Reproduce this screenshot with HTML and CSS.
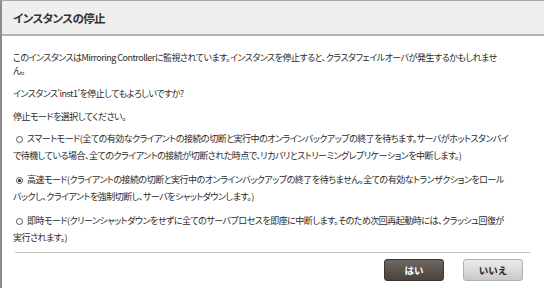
FILE: index.html
```html
<!DOCTYPE html>
<html lang="ja">
<head>
<meta charset="utf-8">
<link rel="stylesheet" href="styles.css">
</head>
<body>
<div class="dialog">
  <div class="titlebar"><h1 class="title">インスタンスの停止</h1></div>
  <div class="content">
    <p class="msg msg-first">このインスタンスはMirroring Controllerに監視されています。インスタンスを停止すると、クラスタフェイルオーバが発生するかもしれませ<br>ん。</p>
    <p class="msg">インスタンス'inst1'を停止してもよろしいですか?</p>
    <p class="msg last-msg">停止モードを選択してください。</p>
    <div class="option"><span class="radio"></span>スマートモード(全ての有効なクライアントの接続の切断と実行中のオンラインバックアップの終了を待ちます。サーバがホットスタンバイ<br>で待機している場合、全てのクライアントの接続が切断された時点で、リカバリとストリーミングレプリケーションを中断します。)</div>
    <div class="option"><span class="radio checked"></span>高速モード(クライアントの接続の切断と実行中のオンラインバックアップの終了を待ちません。全ての有効なトランザクションをロール<br>バックし、クライアントを強制切断し、サーバをシャットダウンします。)</div>
    <div class="option"><span class="radio"></span>即時モード(クリーンシャットダウンをせずに全てのサーバプロセスを即座に中断します。そのため次回再起動時には、クラッシュ回復が<br>実行されます。)</div>
    <hr class="sep">
    <div class="buttons">
      <button class="btn btn-yes">はい</button>
      <button class="btn btn-no">いいえ</button>
    </div>
  </div>
</div>
</body>
</html>
```
FILE: styles.css
```css
html, body { margin: 0; padding: 0; background: #fff; }
body {
  font-family: "Noto Sans CJK JP", "Noto Sans", sans-serif;
  color: #2a2a2a;
}
.dialog {
  width: 542px;
  height: 287px;
  border-left: 2px solid #8c8c8c;
  border-top: 1px solid #a8a8a8;
  display: flex;
  flex-direction: column;
  overflow: hidden;
}
.titlebar {
  flex: 0 0 auto;
  height: 33px;
  background: #efefef;
  border-bottom: 2px solid #b4b4b4;
  display: flex;
  align-items: center;
  padding-left: 11px;
}
.title {
  margin: 0;
  font-size: 11.5px;
  font-weight: 700;
  letter-spacing: -0.6px;
  color: #333;
  font-feature-settings: "palt";
}
.content {
  padding: 15px 0 0 11px;
  font-size: 9px;
  letter-spacing: -0.5px;
  font-feature-settings: "palt";
}
.msg {
  margin: 0 0 10px;
  line-height: 13px;
  white-space: nowrap;
}
.last-msg { margin-bottom: 7px; }
.option {
  margin-top: 7px;
  line-height: 17px;
  white-space: nowrap;
}
.radio {
  display: inline-block;
  width: 7px;
  height: 7px;
  border: 1px solid #555;
  border-radius: 50%;
  margin: 0 4px 0 3px;
  vertical-align: -1px;
  box-sizing: border-box;
  position: relative;
}
.radio.checked::after {
  content: "";
  position: absolute;
  left: 1px; top: 1px;
  width: 3px; height: 3px;
  border-radius: 50%;
  background: #222;
}
.sep {
  margin: 6px 14px 0 2px;
  border: 0;
  border-top: 1px solid #c4c4c4;
}
.buttons {
  display: flex;
  justify-content: flex-end;
  gap: 19px;
  margin-top: 6px;
  padding-right: 21px;
}
.btn {
  width: 60px;
  height: 22px;
  border-radius: 3px;
  font-family: inherit;
  font-size: 9.5px;
  font-weight: 700;
  padding: 0;
}
.btn-yes {
  background: linear-gradient(#6e6660, #4a433e);
  border: 1px solid #3c3632;
  color: #fff;
}
.btn-no {
  background: linear-gradient(#ececec, #c9c9c9);
  border: 1px solid #b0b0b0;
  color: #222;
}
```
